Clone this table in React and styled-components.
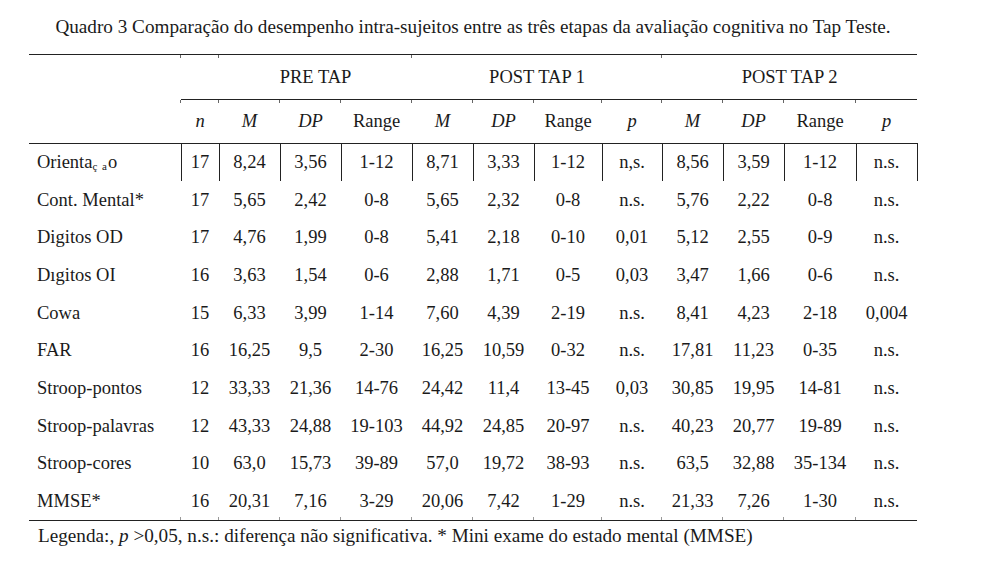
import React from 'react';
import styled, { createGlobalStyle } from 'styled-components';

const serif = '"Liberation Serif", "Times New Roman", Times, serif';

const GlobalStyle = createGlobalStyle`
  html, body {
    margin: 0;
    padding: 0;
    background: #ffffff;
  }
  body {
    font-family: ${serif};
    color: #1a1a1a;
  }
`;

// widths of the 13 columns, label first
const colWidths = [152, 38, 61, 61, 71, 61, 61, 68, 60, 61, 61, 72, 61];

const rows = [
  ['Orientação', '17', '8,24', '3,56', '1-12', '8,71', '3,33', '1-12', 'n,s.', '8,56', '3,59', '1-12', 'n.s.'],
  ['Cont. Mental*', '17', '5,65', '2,42', '0-8', '5,65', '2,32', '0-8', 'n.s.', '5,76', '2,22', '0-8', 'n.s.'],
  ['Digitos OD', '17', '4,76', '1,99', '0-8', '5,41', '2,18', '0-10', '0,01', '5,12', '2,55', '0-9', 'n.s.'],
  ['Dıgitos OI', '16', '3,63', '1,54', '0-6', '2,88', '1,71', '0-5', '0,03', '3,47', '1,66', '0-6', 'n.s.'],
  ['Cowa', '15', '6,33', '3,99', '1-14', '7,60', '4,39', '2-19', 'n.s.', '8,41', '4,23', '2-18', '0,004'],
  ['FAR', '16', '16,25', '9,5', '2-30', '16,25', '10,59', '0-32', 'n.s.', '17,81', '11,23', '0-35', 'n.s.'],
  ['Stroop-pontos', '12', '33,33', '21,36', '14-76', '24,42', '11,4', '13-45', '0,03', '30,85', '19,95', '14-81', 'n.s.'],
  ['Stroop-palavras', '12', '43,33', '24,88', '19-103', '44,92', '24,85', '20-97', 'n.s.', '40,23', '20,77', '19-89', 'n.s.'],
  ['Stroop-cores', '10', '63,0', '15,73', '39-89', '57,0', '19,72', '38-93', 'n.s.', '63,5', '32,88', '35-134', 'n.s.'],
  ['MMSE*', '16', '20,31', '7,16', '3-29', '20,06', '7,42', '1-29', 'n.s.', '21,33', '7,26', '1-30', 'n.s.'],
];

const subHeads = [
  { t: 'n', i: true }, { t: 'M', i: true }, { t: 'DP', i: true }, { t: 'Range' },
  { t: 'M', i: true }, { t: 'DP', i: true }, { t: 'Range' }, { t: 'p', i: true },
  { t: 'M', i: true }, { t: 'DP', i: true }, { t: 'Range' }, { t: 'p', i: true },
];

class App extends React.Component {
  renderLabel(label) {
    if (label === 'Orientação') {
      return <span>Orienta<Broken>ç a</Broken>o</span>;
    }
    return label;
  }

  render() {
    const totalWidth = colWidths.reduce((a, b) => a + b, 0);
    return (
      <Page>
        <GlobalStyle />
        <Sheet style={{ width: totalWidth }}>
          <Title>Quadro 3 Comparação do desempenho intra-sujeitos entre as três etapas da avaliação cognitiva no Tap Teste.</Title>
          <Table>
            <colgroup>
              {colWidths.map((w, i) => <col key={i} style={{ width: w }} />)}
            </colgroup>
            <thead>
              <GroupRow>
                <GroupCell />
                <GroupCell underline tick />
                <GroupCell colSpan={3} underline tick>PRE TAP</GroupCell>
                <GroupCell colSpan={4} underline tick>POST TAP 1</GroupCell>
                <GroupCell colSpan={4} underline tick>POST TAP 2</GroupCell>
              </GroupRow>
              <SubRow>
                <SubCell />
                {subHeads.map((h, i) => (
                  <SubCell key={i} italic={h.i} tick>{h.t}</SubCell>
                ))}
              </SubRow>
            </thead>
            <tbody>
              {rows.map((r, ri) => (
                <DataRow key={ri}>
                  <LabelCell>{this.renderLabel(r[0])}</LabelCell>
                  {r.slice(1).map((v, ci) => (
                    <ValueCell
                      key={ci}
                      boxed={ri === 0}
                      lastCol={ci === r.length - 2}
                      tick={ri === rows.length - 1}
                    >
                      {v}
                    </ValueCell>
                  ))}
                </DataRow>
              ))}
            </tbody>
          </Table>
          <Legend>
            Legenda:, <em>p</em> &gt;0,05, n.s.: diferença não significativa. * Mini exame do estado mental (MMSE)
          </Legend>
        </Sheet>
      </Page>
    );
  }
}

const Page = styled.div`
  padding: 13px 0 0 29px;
  min-height: 550px;
  background: #fff;
  font-family: ${serif};
  color: #1a1a1a;
`;

const Sheet = styled.div`
  display: flex;
  flex-direction: column;
`;

const Title = styled.div`
  font-size: 19.2px;
  line-height: 28px;
  text-align: center;
  white-space: nowrap;
  margin-bottom: 13px;
`;

const Table = styled.table`
  border-collapse: collapse;
  table-layout: fixed;
  width: 100%;
  font-size: 18.5px;
  border-top: 1px solid #222;
  border-bottom: 1px solid #222;
`;

const GroupRow = styled.tr`
  height: 45px;
`;

const GroupCell = styled.th`
  position: relative;
  font-weight: normal;
  text-align: center;
  padding: 0;
  vertical-align: middle;
  border-bottom: ${props => props.underline ? '1px solid #222' : 'none'};
  &::before {
    content: '';
    display: ${props => props.tick ? 'block' : 'none'};
    position: absolute;
    left: -1px;
    top: 0;
    width: 1px;
    height: 3px;
    background: #666;
  }
`;

const SubRow = styled.tr`
  height: 44px;
  border-bottom: 1px solid #222;
`;

const SubCell = styled.th`
  position: relative;
  font-weight: normal;
  font-style: ${props => props.italic ? 'italic' : 'normal'};
  text-align: center;
  padding: 0;
  &::before {
    content: '';
    display: ${props => props.tick ? 'block' : 'none'};
    position: absolute;
    left: -1px;
    top: 0;
    width: 1px;
    height: 3px;
    background: #666;
  }
`;

const DataRow = styled.tr`
  height: 37.7px;
`;

const LabelCell = styled.td`
  padding: 0 0 0 8px;
  white-space: nowrap;
  text-align: left;
`;

const ValueCell = styled.td`
  position: relative;
  padding: 0;
  text-align: center;
  white-space: nowrap;
  border-left: ${props => props.boxed ? '1.5px solid #222' : 'none'};
  border-right: ${props => props.boxed && props.lastCol ? '1.5px solid #222' : 'none'};
  &::before {
    content: '';
    display: ${props => props.tick ? 'block' : 'none'};
    position: absolute;
    left: -1px;
    bottom: 0;
    width: 1px;
    height: 3px;
    background: #999;
  }
`;

const Broken = styled.span`
  font-size: 11px;
  position: relative;
  top: 2px;
  letter-spacing: 1px;
`;

const Legend = styled.div`
  font-size: 19.2px;
  line-height: 26px;
  padding: 2px 0 0 9px;
  white-space: nowrap;
`;

export default App;
